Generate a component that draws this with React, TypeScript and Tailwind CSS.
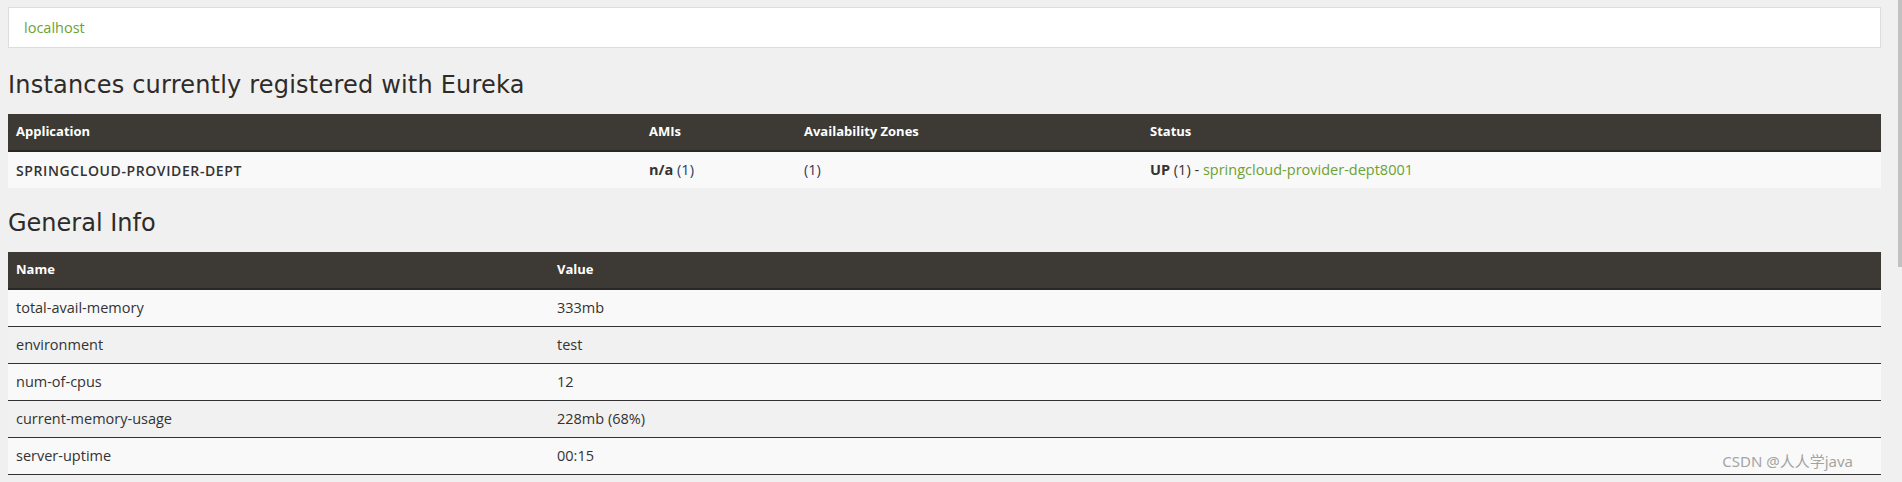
const instances = [
  { app: 'SPRINGCLOUD-PROVIDER-DEPT', ami: 'n/a', zones: '(1)', status: 'UP', link: 'springcloud-provider-dept8001' },
];

const generalInfo = [
  { name: 'total-avail-memory', value: '333mb' },
  { name: 'environment', value: 'test' },
  { name: 'num-of-cpus', value: '12' },
  { name: 'current-memory-usage', value: '228mb (68%)' },
  { name: 'server-uptime', value: '00:15' },
];

const body = "font-['Open_Sans','Noto_Sans',sans-serif]";
const heading = "font-['DejaVu_Sans','Noto_Sans',sans-serif]";

export default function App() {
  return (
    <div className={`relative h-[482px] overflow-hidden bg-[#f0f0f0] pt-[7px] pl-[8px] pr-[21px] text-[14.5px] text-[#333] ${body}`}>
      <div className="flex h-[41px] items-center border border-[#dddddd] bg-white px-[15px]">
        <span className="text-[#6ca133]">localhost</span>
      </div>

      <h1 className={`mt-[24px] mb-[16px] h-[26px] text-[24px] leading-[26px] tracking-[0.2px] text-[#2e2b28] ${heading}`}>
        Instances currently registered with Eureka
      </h1>

      <div>
        <div className="flex h-[38px] items-center border-b-2 border-[#2a2825] bg-[#3d3a35] text-[13px] font-bold text-white">
          <div className="w-[633px] pl-[8px]">Application</div>
          <div className="w-[155px] pl-[8px]">AMIs</div>
          <div className="w-[346px] pl-[8px]">Availability Zones</div>
          <div className="flex-1 pl-[8px]">Status</div>
        </div>
        {instances.map((r) => (
          <div key={r.app} className="flex h-[36px] items-center bg-[#f9f9f9]">
            <div className="w-[633px] pl-[8px] text-[14px] font-semibold tracking-[0.6px]">{r.app}</div>
            <div className="w-[155px] pl-[8px]">
              <b>{r.ami}</b> <span className="text-[#2f3a60]">(1)</span>
            </div>
            <div className="w-[346px] pl-[8px] text-[#2f3a60]">{r.zones}</div>
            <div className="flex-1 pl-[8px]">
              <b>{r.status}</b> (1) - <span className="text-[#6ca133]">{r.link}</span>
            </div>
          </div>
        ))}
      </div>

      <h2 className={`mt-[22px] mb-[16px] h-[26px] text-[24px] leading-[26px] text-[#2e2b28] ${heading}`}>
        General Info
      </h2>

      <div>
        <div className="flex h-[38px] items-center border-b-2 border-[#2a2825] bg-[#3d3a35] text-[13px] font-bold text-white">
          <div className="w-[541px] pl-[8px]">Name</div>
          <div className="flex-1 pl-[8px]">Value</div>
        </div>
        {generalInfo.map((r, i) => (
          <div
            key={r.name}
            className={`flex h-[37px] items-center border-b border-[#333] ${i % 2 === 1 ? 'bg-[#f1f1f1]' : 'bg-[#f9f9f9]'}`}
          >
            <div className="w-[541px] pl-[8px]">{r.name}</div>
            <div className="flex-1 pl-[8px]">{r.value}</div>
          </div>
        ))}
      </div>

      <div className="absolute right-[49px] top-[450px] text-[15px] leading-[22px] text-[#a3a3a3] [text-shadow:0_0_1px_#fff] font-['Noto_Sans','Noto_Sans_CJK_SC',sans-serif]">
        CSDN @人人学java
      </div>

      <div className="absolute right-0 top-0 h-[267px] w-[4px] bg-[#c1c1c1]" />
    </div>
  );
}
